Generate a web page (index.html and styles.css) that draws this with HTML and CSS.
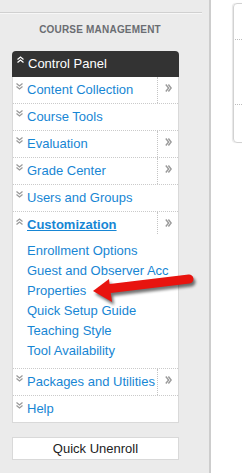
FILE: index.html
```html
<!DOCTYPE html>
<html>
<head>
    <link rel="stylesheet" href="styles.css">
</head>
<body>
    <div class="page">
        <div class="sidebar">
            <div class="sidebar-rule"></div>
            <h2 class="sidebar-title">COURSE MANAGEMENT</h2>

            <div class="panel">
                <div class="panel-head">
                    <svg class="chev chev-head" viewBox="0 0 7 7"><path d="M0.5 3.5 3.5 1 6.5 3.5M0.5 6.5 3.5 4 6.5 6.5"/></svg>
                    <span>Control Panel</span>
                </div>

                <div class="panel-body">
                    <div class="menu-row">
                        <a class="menu-link" href="#"><svg class="chev" viewBox="0 0 7 7"><path d="M0.5 0.5 3.5 3 6.5 0.5M0.5 3.5 3.5 6 6.5 3.5"/></svg>Content Collection</a>
                        <span class="menu-more"><svg class="more" viewBox="0 0 7 8"><path d="M0.8 0.5 3.6 4 0.8 7.5M3.4 0.5 6.2 4 3.4 7.5"/></svg></span>
                    </div>
                    <div class="menu-row">
                        <a class="menu-link" href="#"><svg class="chev" viewBox="0 0 7 7"><path d="M0.5 0.5 3.5 3 6.5 0.5M0.5 3.5 3.5 6 6.5 3.5"/></svg>Course Tools</a>
                    </div>
                    <div class="menu-row">
                        <a class="menu-link" href="#"><svg class="chev" viewBox="0 0 7 7"><path d="M0.5 0.5 3.5 3 6.5 0.5M0.5 3.5 3.5 6 6.5 3.5"/></svg>Evaluation</a>
                        <span class="menu-more"><svg class="more" viewBox="0 0 7 8"><path d="M0.8 0.5 3.6 4 0.8 7.5M3.4 0.5 6.2 4 3.4 7.5"/></svg></span>
                    </div>
                    <div class="menu-row">
                        <a class="menu-link" href="#"><svg class="chev" viewBox="0 0 7 7"><path d="M0.5 0.5 3.5 3 6.5 0.5M0.5 3.5 3.5 6 6.5 3.5"/></svg>Grade Center</a>
                        <span class="menu-more"><svg class="more" viewBox="0 0 7 8"><path d="M0.8 0.5 3.6 4 0.8 7.5M3.4 0.5 6.2 4 3.4 7.5"/></svg></span>
                    </div>
                    <div class="menu-row">
                        <a class="menu-link" href="#"><svg class="chev" viewBox="0 0 7 7"><path d="M0.5 0.5 3.5 3 6.5 0.5M0.5 3.5 3.5 6 6.5 3.5"/></svg>Users and Groups</a>
                    </div>

                    <div class="menu-group">
                        <div class="menu-row menu-row-open">
                            <a class="menu-link menu-link-active" href="#"><svg class="chev chev-open" viewBox="0 0 7 7"><path d="M0.5 3.5 3.5 1 6.5 3.5M0.5 6.5 3.5 4 6.5 6.5"/></svg>Customization</a>
                            <span class="menu-more menu-more-short"><svg class="more" viewBox="0 0 7 8"><path d="M0.8 0.5 3.6 4 0.8 7.5M3.4 0.5 6.2 4 3.4 7.5"/></svg></span>
                        </div>
                        <ul class="sub-list">
                            <li><a href="#">Enrollment Options</a></li>
                            <li><a href="#">Guest and Observer Acc</a></li>
                            <li><a href="#">Properties</a></li>
                            <li><a href="#">Quick Setup Guide</a></li>
                            <li><a href="#">Teaching Style</a></li>
                            <li><a href="#">Tool Availability</a></li>
                        </ul>
                    </div>

                    <div class="menu-row">
                        <a class="menu-link" href="#"><svg class="chev" viewBox="0 0 7 7"><path d="M0.5 0.5 3.5 3 6.5 0.5M0.5 3.5 3.5 6 6.5 3.5"/></svg>Packages and Utilities</a>
                        <span class="menu-more"><svg class="more" viewBox="0 0 7 8"><path d="M0.8 0.5 3.6 4 0.8 7.5M3.4 0.5 6.2 4 3.4 7.5"/></svg></span>
                    </div>
                    <div class="menu-row menu-row-last">
                        <a class="menu-link" href="#"><svg class="chev" viewBox="0 0 7 7"><path d="M0.5 0.5 3.5 3 6.5 0.5M0.5 3.5 3.5 6 6.5 3.5"/></svg>Help</a>
                    </div>
                </div>
            </div>

            <div class="unenroll">Quick Unenroll</div>
        </div>

        <div class="main">
            <div class="content-box">
                <div class="box-section box-top"></div>
                <div class="box-section box-middle"></div>
                <div class="box-section box-bottom"></div>
            </div>
        </div>
    </div>

    <!-- annotation arrow pointing at Properties -->
    <svg class="arrow" width="242" height="473" viewBox="0 0 242 473">
        <defs>
            <filter id="arrow-shadow" x="-20%" y="-50%" width="140%" height="200%">
                <feGaussianBlur stdDeviation="1.6"/>
            </filter>
        </defs>
        <g transform="translate(2 3)" fill="#000" stroke="#000" opacity="0.55" filter="url(#arrow-shadow)">
            <line x1="106" y1="289" x2="189" y2="279" stroke-width="9" stroke-linecap="round"/>
            <polygon points="93,291 109,279 112,302" stroke="none"/>
        </g>
        <g fill="#e8140f" stroke="#e8140f">
            <line x1="106" y1="289" x2="189" y2="279" stroke-width="9" stroke-linecap="round"/>
            <polygon points="93,291 109,279 112,302" stroke="none"/>
        </g>
    </svg>
</body>
</html>
```

FILE: styles.css
```css
body {
    margin: 0;
    font-family: "Liberation Sans", Arial, sans-serif;
    background: #fff;
    overflow: hidden;
}

.page {
    display: flex;
    height: 473px;
}

.sidebar {
    flex: none;
    width: 209px;
    height: 100%;
    background: #ebebeb;
    border-right: 2px solid #cdcdcd;
}

.sidebar-rule {
    height: 12px;
    margin-right: 7px;
    border-bottom: 1px solid #d0d0d0;
    box-shadow: 0 1px 0 #f7f7f7;
}

.sidebar-title {
    margin: 11px 9px 15px 0;
    font-size: 10px;
    line-height: 12px;
    letter-spacing: 0.2px;
    font-weight: bold;
    text-align: center;
    color: #6a6d72;
}

.panel {
    width: 167px;
    margin-left: 12px;
}

.panel-head {
    display: flex;
    align-items: flex-start;
    height: 26px;
    padding-left: 4px;
    background: #333;
    border-radius: 4px 4px 0 0;
    color: #fff;
    font-size: 13px;
    line-height: 26px;
}

.panel-body {
    background: #fff;
    border: 1px solid #d9d9d9;
    border-top: none;
}

.chev {
    flex: none;
    width: 7px;
    height: 7px;
    margin: 6px 4px 0 0;
    fill: none;
    stroke: #9a9a9a;
    stroke-width: 1.3;
}

.chev-head {
    margin-top: 5px;
    margin-left: 1px;
    margin-right: 4px;
    stroke: #fff;
}

.chev-open {
    margin-top: 6px;
}

.menu-row {
    display: flex;
    height: 26px;
    border-bottom: 1px dotted #cacaca;
}

.menu-row-open {
    border-bottom: none;
}

.menu-row-last {
    border-bottom: none;
}

.menu-link {
    flex: 1;
    display: flex;
    align-items: flex-start;
    padding-left: 3px;
    font-size: 13px;
    line-height: 26px;
    color: #1786d4;
    text-decoration: none;
    white-space: nowrap;
    overflow: hidden;
}

.menu-link-active {
    font-weight: bold;
    text-decoration: underline;
}

.menu-more {
    flex: none;
    width: 20px;
    border-left: 1px dotted #c4c4c4;
    display: flex;
    justify-content: center;
    align-items: flex-start;
}

.menu-more-short {
    height: 22px;
}

.more {
    width: 7px;
    height: 8px;
    margin-top: 7px;
    fill: none;
    stroke: #9a9a9a;
    stroke-width: 1.4;
}

.menu-group {
    border-bottom: 1px dotted #cacaca;
}

.sub-list {
    list-style: none;
    margin: 0;
    padding: 3px 0 7px 14px;
}

.sub-list li {
    font-size: 13px;
    line-height: 20px;
    white-space: nowrap;
}

.sub-list a {
    color: #1786d4;
    text-decoration: none;
}

.unenroll {
    width: 165px;
    margin: 14px 0 0 12px;
    background: #fff;
    border: 1px solid #d9d9d9;
    font-size: 13px;
    line-height: 21px;
    text-align: center;
    color: #222;
}

.main {
    flex: 1;
    min-width: 0;
    overflow: hidden;
    padding: 3px 0 0 22px;
    background: #fff;
}

.content-box {
    width: 40px;
    height: 138px;
    border: 1px solid #d2d2d2;
    border-radius: 4px 0 0 4px;
    box-shadow: -1px 0 1px #e6e6e6;
}

.box-section {
    margin-left: 1px;
}

.box-top {
    height: 35px;
    border-bottom: 1px dotted #bdbdbd;
}

.box-middle {
    height: 64px;
    border-bottom: 1px dotted #bdbdbd;
}

.arrow {
    position: absolute;
    top: 0;
    left: 0;
    pointer-events: none;
}
```
